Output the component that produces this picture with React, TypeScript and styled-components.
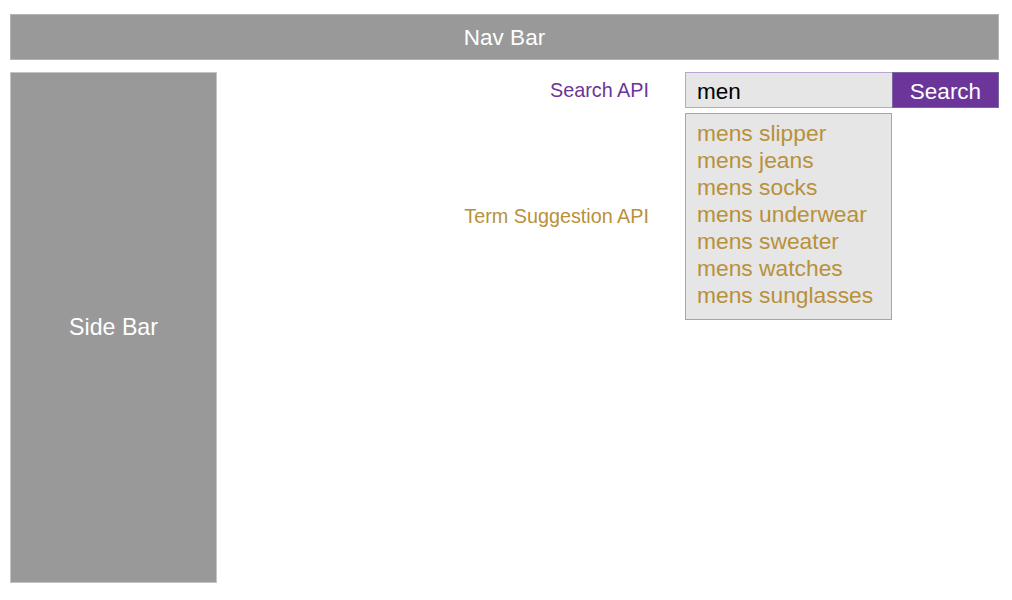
import React from 'react';
import styled, { createGlobalStyle } from 'styled-components';

const GlobalStyle = createGlobalStyle`
  html, body {
    margin: 0;
    padding: 0;
    background: #ffffff;
    font-family: "Liberation Sans", Arial, Helvetica, sans-serif;
  }
`;

const Page = styled.div`
  display: flex;
  flex-direction: column;
  gap: 12px;
  padding: 14px 13px 0 10px;
  width: 1012px;
  height: 600px;
  box-sizing: border-box;
`;

const Block = styled.div<{ $size: number }>`
  display: flex;
  align-items: center;
  justify-content: center;
  background: #999999;
  border: 1px solid #b4b4b4;
  box-sizing: border-box;
  color: #ffffff;
  font-size: ${(p) => p.$size}px;
`;

const NavBar = styled(Block)`
  height: 46px;
  padding-top: 2px;
`;

const Body = styled.div`
  display: flex;
`;

const SideBar = styled(Block)`
  width: 207px;
  height: 511px;
  border-color: #c4c4c4;
`;

const Main = styled.div`
  flex: 1;
  display: grid;
  grid-template-columns: 1fr 207px 107px;
  grid-template-rows: 36px auto;
  row-gap: 5px;
  align-content: start;
`;

const Label = styled.div<{ $color: string }>`
  align-self: center;
  justify-self: end;
  margin-right: 36px;
  font-size: 19.8px;
  color: ${(p) => p.$color};
`;

const SearchInput = styled.div`
  display: flex;
  align-items: center;
  padding: 3px 0 0 11px;
  background: #e6e6e6;
  border: 1px solid #bba3d3;
  border-right: none;
  color: #000000;
  font-size: 22.5px;
`;

const SearchButton = styled.button`
  margin: 0;
  padding: 3px 0 0 0;
  background: #6b3599;
  border: 1px solid #7a66a0;
  color: #ffffff;
  font-family: inherit;
  font-size: 22.5px;
`;

const Suggestions = styled.ul`
  margin: 0;
  padding: 6px 0 10px 11px;
  list-style: none;
  background: #e6e6e6;
  border: 1px solid #a3a5b3;
`;

const Suggestion = styled.li`
  height: 27px;
  line-height: 27px;
  font-size: 22.8px;
  color: #b8913a;
`;

const terms = [
  'mens slipper',
  'mens jeans',
  'mens socks',
  'mens underwear',
  'mens sweater',
  'mens watches',
  'mens sunglasses',
];

const App = () => {
  return (
    <>
      <GlobalStyle />
      <Page>
        <NavBar $size={22.5}>Nav Bar</NavBar>
        <Body>
          <SideBar $size={23.2}>Side Bar</SideBar>
          <Main>
            <Label $color="#6b3599">Search API</Label>
            <SearchInput>men</SearchInput>
            <SearchButton>Search</SearchButton>
            <Label $color="#b8913a">Term Suggestion API</Label>
            <Suggestions>
              {terms.map((t) => (
                <Suggestion key={t}>{t}</Suggestion>
              ))}
            </Suggestions>
          </Main>
        </Body>
      </Page>
    </>
  );
};

export default App;
